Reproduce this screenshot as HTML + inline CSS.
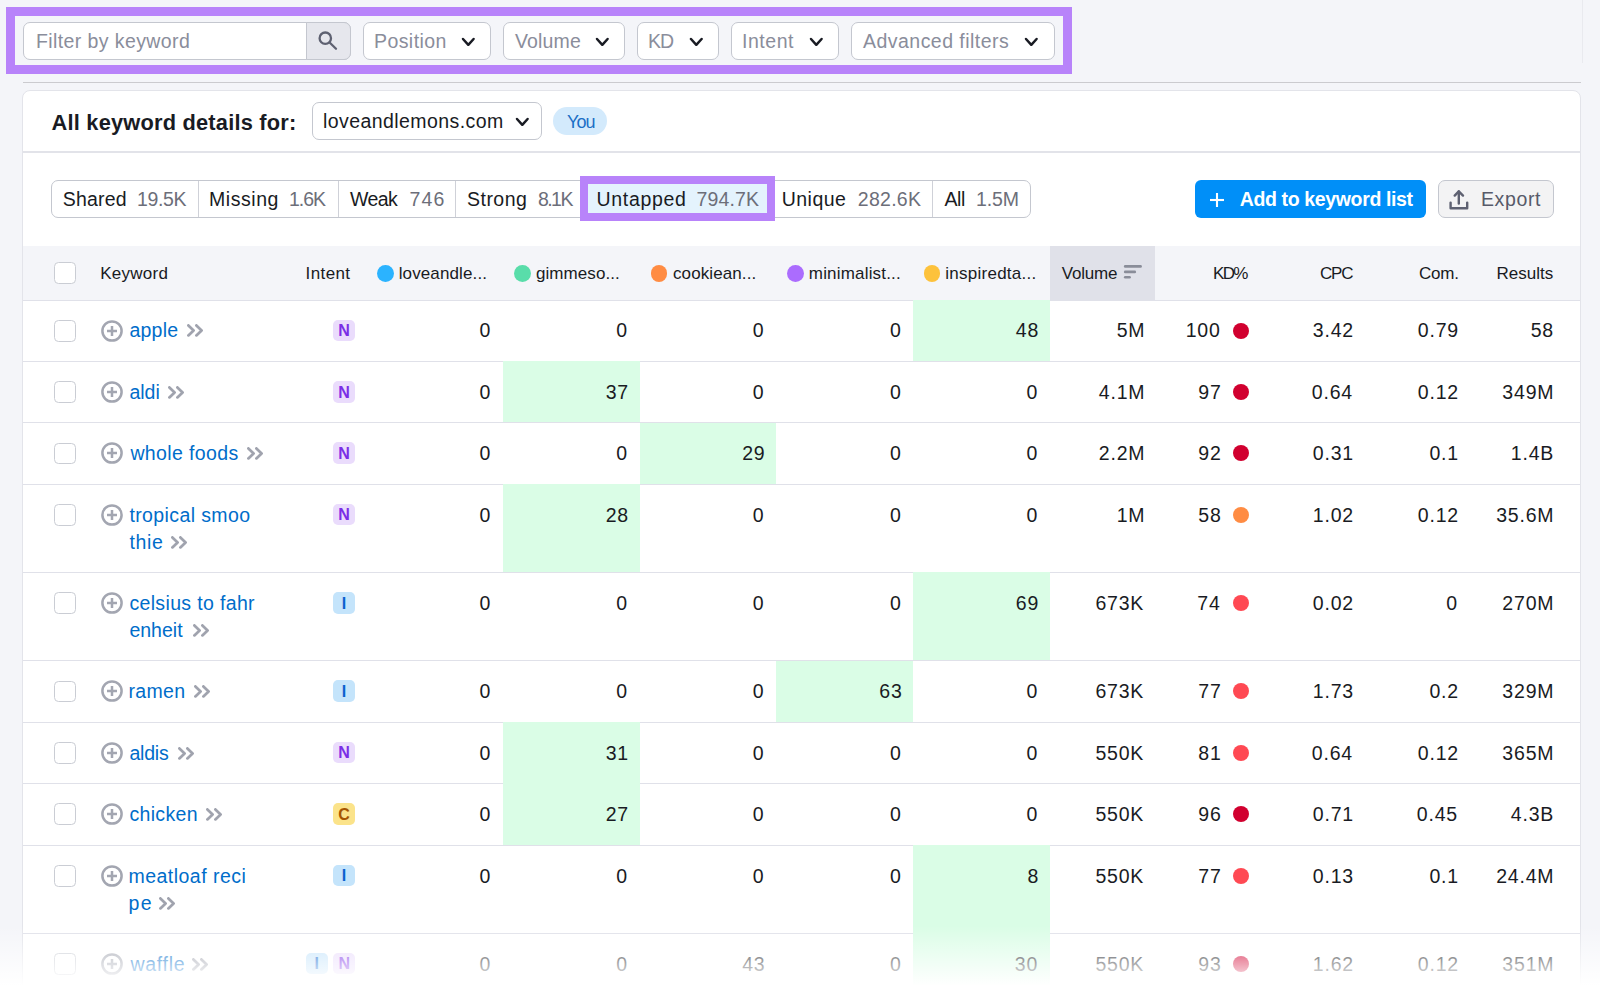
<!DOCTYPE html>
<html><head><meta charset="utf-8"><title>Keyword Gap</title>
<style>
html,body{margin:0;padding:0;}
body{width:1600px;height:995px;overflow:hidden;background:#f4f5f9;position:relative;font-family:"Liberation Sans", sans-serif;}
body>div{position:absolute;}
.t{white-space:nowrap;}
</style></head><body>
<div style="left:1582px;top:0px;width:1px;height:63px;background:#e9eaef;"></div>
<div style="left:6px;top:7px;width:1066.3px;height:67.1px;border:9.5px solid #b883fa;box-sizing:border-box;"></div>
<div style="left:23px;top:22px;width:328px;height:38px;background:#fff;border:1px solid #c4c7cf;border-radius:7px;box-sizing:border-box;"></div>
<div style="left:306px;top:22px;width:45px;height:38px;background:#e6e7ed;border:1px solid #c4c7cf;border-radius:0 7px 7px 0;box-sizing:border-box;"></div>
<div class="t" style="top:31.79px;font-size:19.5px;line-height:19.5px;color:#8a8d9b;font-weight:400;letter-spacing:0.404px;left:36.00px;">Filter by keyword</div>
<svg style="position:absolute;left:316px;top:29px;" width="24" height="24" viewBox="0 0 24 24"><circle cx="9.3" cy="9.2" r="5.7" fill="none" stroke="#5e6171" stroke-width="2.3"/><line x1="13.6" y1="13.5" x2="20" y2="19.8" stroke="#5e6171" stroke-width="2.3" stroke-linecap="round"/></svg>
<div style="left:362.5px;top:22px;width:128.0px;height:38px;background:#fff;border:1px solid #c4c7cf;border-radius:7px;box-sizing:border-box;"></div>
<div class="t" style="top:31.79px;font-size:19.5px;line-height:19.5px;color:#8a8d9b;font-weight:400;letter-spacing:0.424px;left:374.00px;">Position</div>
<svg style="position:absolute;left:461.2px;top:36.9px;" width="14.6" height="9.8" viewBox="0 0 14.6 9.8"><polyline points="2,2 7.3,7.8 12.6,2" fill="none" stroke="#191b23" stroke-width="2.5" stroke-linecap="round" stroke-linejoin="round"/></svg>
<div style="left:502.5px;top:22px;width:122.5px;height:38px;background:#fff;border:1px solid #c4c7cf;border-radius:7px;box-sizing:border-box;"></div>
<div class="t" style="top:31.79px;font-size:19.5px;line-height:19.5px;color:#8a8d9b;font-weight:400;letter-spacing:0.161px;left:515.00px;">Volume</div>
<svg style="position:absolute;left:595.2px;top:36.9px;" width="14.6" height="9.8" viewBox="0 0 14.6 9.8"><polyline points="2,2 7.3,7.8 12.6,2" fill="none" stroke="#191b23" stroke-width="2.5" stroke-linecap="round" stroke-linejoin="round"/></svg>
<div style="left:637px;top:22px;width:82px;height:38px;background:#fff;border:1px solid #c4c7cf;border-radius:7px;box-sizing:border-box;"></div>
<div class="t" style="top:31.79px;font-size:19.5px;line-height:19.5px;color:#8a8d9b;font-weight:400;letter-spacing:-1.006px;left:648.00px;">KD</div>
<svg style="position:absolute;left:688.7px;top:36.9px;" width="14.6" height="9.8" viewBox="0 0 14.6 9.8"><polyline points="2,2 7.3,7.8 12.6,2" fill="none" stroke="#191b23" stroke-width="2.5" stroke-linecap="round" stroke-linejoin="round"/></svg>
<div style="left:730.5px;top:22px;width:108.5px;height:38px;background:#fff;border:1px solid #c4c7cf;border-radius:7px;box-sizing:border-box;"></div>
<div class="t" style="top:31.79px;font-size:19.5px;line-height:19.5px;color:#8a8d9b;font-weight:400;letter-spacing:0.526px;left:742.00px;">Intent</div>
<svg style="position:absolute;left:809.2px;top:36.9px;" width="14.6" height="9.8" viewBox="0 0 14.6 9.8"><polyline points="2,2 7.3,7.8 12.6,2" fill="none" stroke="#191b23" stroke-width="2.5" stroke-linecap="round" stroke-linejoin="round"/></svg>
<div style="left:851px;top:22px;width:203.5px;height:38px;background:#fff;border:1px solid #c4c7cf;border-radius:7px;box-sizing:border-box;"></div>
<div class="t" style="top:31.79px;font-size:19.5px;line-height:19.5px;color:#8a8d9b;font-weight:400;letter-spacing:0.467px;left:863.00px;">Advanced filters</div>
<svg style="position:absolute;left:1024.45px;top:36.9px;" width="14.6" height="9.8" viewBox="0 0 14.6 9.8"><polyline points="2,2 7.3,7.8 12.6,2" fill="none" stroke="#191b23" stroke-width="2.5" stroke-linecap="round" stroke-linejoin="round"/></svg>
<div style="left:23px;top:82px;width:1558px;height:1.2px;background:#cbcbcf;"></div>
<div style="left:22px;top:90.4px;width:1559px;height:1000px;background:#fff;border:1px solid #e3e4ea;border-radius:8px;box-sizing:border-box;"></div>
<div class="t" style="top:111.85px;font-size:21.8px;line-height:21.8px;color:#191b23;font-weight:700;letter-spacing:0.210px;left:51.60px;">All keyword details for:</div>
<div style="left:312px;top:102px;width:230px;height:38px;background:#fff;border:1px solid #c4c7cf;border-radius:7px;box-sizing:border-box;"></div>
<div class="t" style="top:111.79px;font-size:19.5px;line-height:19.5px;color:#191b23;font-weight:400;letter-spacing:0.426px;left:323.00px;">loveandlemons.com</div>
<svg style="position:absolute;left:515.2px;top:117.1px;" width="14.6" height="9.8" viewBox="0 0 14.6 9.8"><polyline points="2,2 7.3,7.8 12.6,2" fill="none" stroke="#191b23" stroke-width="2.5" stroke-linecap="round" stroke-linejoin="round"/></svg>
<div style="left:553px;top:107px;width:54px;height:28px;background:#d3eafc;border-radius:14px;"></div>
<div class="t" style="top:113.06px;font-size:18px;line-height:18px;color:#1b6fc6;font-weight:400;letter-spacing:-0.932px;left:567.00px;">You</div>
<div style="left:23px;top:151px;width:1557px;height:1.5px;background:#e2e3e9;"></div>
<div style="left:51px;top:180px;width:979.6px;height:38px;background:#fff;border:1px solid #c4c7cf;border-radius:7px;box-sizing:border-box;"></div>
<div style="left:197.5px;top:181px;width:1px;height:36px;background:#cfd1d8;"></div>
<div style="left:337.6px;top:181px;width:1px;height:36px;background:#cfd1d8;"></div>
<div style="left:455px;top:181px;width:1px;height:36px;background:#cfd1d8;"></div>
<div style="left:932.2px;top:181px;width:1px;height:36px;background:#cfd1d8;"></div>
<div style="left:580.2px;top:175.8px;width:195.3px;height:45px;border:8px solid #b883fa;box-sizing:border-box;background:#e4f3fd;"></div>
<div class="t" style="top:189.79px;font-size:19.5px;line-height:19.5px;color:#191b23;font-weight:400;letter-spacing:0.213px;left:62.70px;">Shared</div>
<div class="t" style="top:189.79px;font-size:19.5px;line-height:19.5px;color:#6c6e79;font-weight:400;letter-spacing:-0.363px;left:137.00px;">19.5K</div>
<div class="t" style="top:189.79px;font-size:19.5px;line-height:19.5px;color:#191b23;font-weight:400;letter-spacing:0.558px;left:209.00px;">Missing</div>
<div class="t" style="top:189.79px;font-size:19.5px;line-height:19.5px;color:#6c6e79;font-weight:400;letter-spacing:-1.036px;left:289.00px;">1.6K</div>
<div class="t" style="top:189.79px;font-size:19.5px;line-height:19.5px;color:#191b23;font-weight:400;letter-spacing:-0.581px;left:350.00px;">Weak</div>
<div class="t" style="top:189.79px;font-size:19.5px;line-height:19.5px;color:#6c6e79;font-weight:400;letter-spacing:1.155px;left:409.50px;">746</div>
<div class="t" style="top:189.79px;font-size:19.5px;line-height:19.5px;color:#191b23;font-weight:400;letter-spacing:0.478px;left:467.00px;">Strong</div>
<div class="t" style="top:189.79px;font-size:19.5px;line-height:19.5px;color:#6c6e79;font-weight:400;letter-spacing:-1.569px;left:538.00px;">8.1K</div>
<div class="t" style="top:189.79px;font-size:19.5px;line-height:19.5px;color:#191b23;font-weight:400;letter-spacing:0.682px;left:596.50px;">Untapped</div>
<div class="t" style="top:189.79px;font-size:19.5px;line-height:19.5px;color:#6c6e79;font-weight:400;letter-spacing:0.140px;left:696.50px;">794.7K</div>
<div class="t" style="top:189.79px;font-size:19.5px;line-height:19.5px;color:#191b23;font-weight:400;letter-spacing:0.450px;left:781.80px;">Unique</div>
<div class="t" style="top:189.79px;font-size:19.5px;line-height:19.5px;color:#6c6e79;font-weight:400;letter-spacing:0.280px;left:857.80px;">282.6K</div>
<div class="t" style="top:189.79px;font-size:19.5px;line-height:19.5px;color:#191b23;font-weight:400;letter-spacing:-0.369px;left:944.40px;">All</div>
<div class="t" style="top:189.79px;font-size:19.5px;line-height:19.5px;color:#6c6e79;font-weight:400;letter-spacing:-0.103px;left:976.00px;">1.5M</div>
<div style="left:1195.4px;top:180.3px;width:230.8px;height:37.5px;background:#008ff8;border-radius:6px;"></div>
<svg style="position:absolute;left:1208px;top:191px;" width="18" height="18" viewBox="0 0 18 18"><line x1="9" y1="2" x2="9" y2="16" stroke="#fff" stroke-width="2.1"/><line x1="2" y1="9" x2="16" y2="9" stroke="#fff" stroke-width="2.1"/></svg>
<div class="t" style="top:189.79px;font-size:19.5px;line-height:19.5px;color:#fff;font-weight:700;letter-spacing:-0.362px;left:1239.75px;">Add to keyword list</div>
<div style="left:1437.7px;top:180.3px;width:116.2px;height:37.3px;background:#f3f3f4;border:1px solid #c4c7cf;border-radius:7px;box-sizing:border-box;"></div>
<svg style="position:absolute;left:1447px;top:188px;" width="24" height="24" viewBox="0 0 24 24"><polyline points="3.6,14.6 3.6,20.2 20.2,20.2 20.2,14.6" fill="none" stroke="#5e6171" stroke-width="2.4" stroke-linecap="round" stroke-linejoin="round"/><line x1="11.8" y1="3.5" x2="11.8" y2="15.5" stroke="#5e6171" stroke-width="2.4" stroke-linecap="round"/><polyline points="7.7,7.6 11.8,3.3 16,7.6" fill="none" stroke="#5e6171" stroke-width="2.4" stroke-linecap="round" stroke-linejoin="round"/></svg>
<div class="t" style="top:189.79px;font-size:19.5px;line-height:19.5px;color:#575a69;font-weight:400;letter-spacing:0.612px;left:1481.00px;">Export</div>
<div style="left:23px;top:246px;width:1557px;height:54px;background:#f4f5f9;"></div>
<div style="left:1050px;top:246px;width:105px;height:54px;background:#e0e1e9;"></div>
<div style="left:23px;top:299.5px;width:1557px;height:1px;background:#e0e1e9;"></div>
<div style="left:54px;top:262px;width:21.6px;height:21.6px;background:#fff;border:1.4px solid #cacdd4;border-radius:4.5px;box-sizing:border-box;"></div>
<div class="t" style="top:264.91px;font-size:17px;line-height:17px;color:#191b23;font-weight:400;letter-spacing:0.261px;left:100.25px;">Keyword</div>
<div class="t" style="top:264.91px;font-size:17px;line-height:17px;color:#191b23;font-weight:400;letter-spacing:0.378px;left:305.60px;">Intent</div>
<div style="left:377.2px;top:264.9px;width:16.9px;height:16.8px;background:#2bb3ff;border-radius:50%;"></div>
<div class="t" style="top:264.91px;font-size:17px;line-height:17px;color:#191b23;font-weight:400;letter-spacing:0.120px;left:398.70px;">loveandle...</div>
<div style="left:514px;top:264.9px;width:16.9px;height:16.8px;background:#59ddaa;border-radius:50%;"></div>
<div class="t" style="top:264.91px;font-size:17px;line-height:17px;color:#191b23;font-weight:400;letter-spacing:0.066px;left:536.00px;">gimmeso...</div>
<div style="left:650.5px;top:264.9px;width:16.9px;height:16.8px;background:#ff8c43;border-radius:50%;"></div>
<div class="t" style="top:264.91px;font-size:17px;line-height:17px;color:#191b23;font-weight:400;letter-spacing:0.100px;left:673.00px;">cookiean...</div>
<div style="left:787px;top:264.9px;width:16.9px;height:16.8px;background:#ab6cfe;border-radius:50%;"></div>
<div class="t" style="top:264.91px;font-size:17px;line-height:17px;color:#191b23;font-weight:400;letter-spacing:0.183px;left:808.80px;">minimalist...</div>
<div style="left:923.5px;top:264.9px;width:16.9px;height:16.8px;background:#fdc23c;border-radius:50%;"></div>
<div class="t" style="top:264.91px;font-size:17px;line-height:17px;color:#191b23;font-weight:400;letter-spacing:0.254px;left:945.30px;">inspiredta...</div>
<div class="t" style="top:264.91px;font-size:17px;line-height:17px;color:#191b23;font-weight:400;letter-spacing:-0.190px;left:1061.70px;">Volume</div>
<svg style="position:absolute;left:1122px;top:263px;" width="22" height="18" viewBox="0 0 22 18"><line x1="3.2" y1="3.4" x2="18.6" y2="3.4" stroke="#8a8d99" stroke-width="2.6" stroke-linecap="round"/><line x1="3.2" y1="8.9" x2="12.8" y2="8.9" stroke="#8a8d99" stroke-width="2.6" stroke-linecap="round"/><line x1="3.2" y1="14.2" x2="7.6" y2="14.2" stroke="#8a8d99" stroke-width="2.6" stroke-linecap="round"/></svg>
<div class="t" style="top:264.91px;font-size:17px;line-height:17px;color:#191b23;font-weight:400;letter-spacing:-1.658px;left:1213.00px;">KD%</div>
<div class="t" style="top:264.91px;font-size:17px;line-height:17px;color:#191b23;font-weight:400;letter-spacing:-1.158px;left:1320.00px;">CPC</div>
<div class="t" style="top:264.91px;font-size:17px;line-height:17px;color:#191b23;font-weight:400;letter-spacing:-0.198px;left:1419.00px;">Com.</div>
<div class="t" style="top:264.91px;font-size:17px;line-height:17px;color:#191b23;font-weight:400;letter-spacing:0.019px;left:1496.50px;">Results</div>
<div style="left:913px;top:300px;width:137px;height:61.39999999999998px;background:#dafde6;"></div>
<div style="left:23px;top:360.9px;width:1557px;height:1px;background:#e0e1e9;"></div>
<div style="left:54px;top:320px;width:21.6px;height:21.6px;background:#fff;border:1.4px solid #cacdd4;border-radius:4.5px;box-sizing:border-box;"></div>
<svg style="position:absolute;left:99px;top:317.6px;" width="26" height="26" viewBox="0 0 26 26"><circle cx="13" cy="13" r="9.6" fill="none" stroke="#a3a6b1" stroke-width="2.5"/><line x1="13" y1="8" x2="13" y2="18" stroke="#a3a6b1" stroke-width="2.5"/><line x1="8" y1="13" x2="18" y2="13" stroke="#a3a6b1" stroke-width="2.5"/></svg>
<div class="t" style="top:320.79px;font-size:19.5px;line-height:19.5px;color:#006dca;font-weight:400;letter-spacing:0.258px;left:129.40px;">apple</div>
<svg style="position:absolute;left:186.9px;top:323.9px;" width="17" height="14" viewBox="0 0 17 14"><polyline points="1.4,1.4 6.6,6.4 1.4,11.4" fill="none" stroke="#a0a3ae" stroke-width="2.75" stroke-linecap="round" stroke-linejoin="round"/><polyline points="9.4,1.4 14.6,6.4 9.4,11.4" fill="none" stroke="#a0a3ae" stroke-width="2.75" stroke-linecap="round" stroke-linejoin="round"/></svg>
<div style="left:333.2px;top:319.5px;width:21.8px;height:21.9px;background:#eadcfc;border-radius:5px;"></div>
<div class="t" style="top:322.76px;font-size:16px;line-height:16px;color:#7b2ee6;font-weight:700;left:144.10px;width:400px;text-align:center;">N</div>
<div class="t" style="top:320.79px;font-size:19.5px;line-height:19.5px;color:#191b23;font-weight:400;letter-spacing:0.800px;right:1108.76px;text-align:right;">0</div>
<div class="t" style="top:320.79px;font-size:19.5px;line-height:19.5px;color:#191b23;font-weight:400;letter-spacing:0.800px;right:972.06px;text-align:right;">0</div>
<div class="t" style="top:320.79px;font-size:19.5px;line-height:19.5px;color:#191b23;font-weight:400;letter-spacing:0.800px;right:835.56px;text-align:right;">0</div>
<div class="t" style="top:320.79px;font-size:19.5px;line-height:19.5px;color:#191b23;font-weight:400;letter-spacing:0.800px;right:698.36px;text-align:right;">0</div>
<div class="t" style="top:320.79px;font-size:19.5px;line-height:19.5px;color:#191b23;font-weight:400;letter-spacing:0.800px;right:560.86px;text-align:right;">48</div>
<div class="t" style="top:320.79px;font-size:19.5px;line-height:19.5px;color:#191b23;font-weight:400;letter-spacing:0.800px;right:454.66px;text-align:right;">5M</div>
<div class="t" style="top:320.79px;font-size:19.5px;line-height:19.5px;color:#191b23;font-weight:400;letter-spacing:0.800px;right:379.36px;text-align:right;">100</div>
<div style="left:1233px;top:322.6px;width:16px;height:16px;background:#d1002f;border-radius:50%;"></div>
<div class="t" style="top:320.79px;font-size:19.5px;line-height:19.5px;color:#191b23;font-weight:400;letter-spacing:0.800px;right:246.06px;text-align:right;">3.42</div>
<div class="t" style="top:320.79px;font-size:19.5px;line-height:19.5px;color:#191b23;font-weight:400;letter-spacing:0.800px;right:141.06px;text-align:right;">0.79</div>
<div class="t" style="top:320.79px;font-size:19.5px;line-height:19.5px;color:#191b23;font-weight:400;letter-spacing:0.800px;right:46.06px;text-align:right;">58</div>
<div style="left:503px;top:361.4px;width:136.5px;height:61.30000000000001px;background:#dafde6;"></div>
<div style="left:23px;top:422.2px;width:1557px;height:1px;background:#e0e1e9;"></div>
<div style="left:54px;top:381.4px;width:21.6px;height:21.6px;background:#fff;border:1.4px solid #cacdd4;border-radius:4.5px;box-sizing:border-box;"></div>
<svg style="position:absolute;left:99px;top:379.0px;" width="26" height="26" viewBox="0 0 26 26"><circle cx="13" cy="13" r="9.6" fill="none" stroke="#a3a6b1" stroke-width="2.5"/><line x1="13" y1="8" x2="13" y2="18" stroke="#a3a6b1" stroke-width="2.5"/><line x1="8" y1="13" x2="18" y2="13" stroke="#a3a6b1" stroke-width="2.5"/></svg>
<div class="t" style="top:382.79px;font-size:19.5px;line-height:19.5px;color:#006dca;font-weight:400;letter-spacing:-0.007px;left:129.40px;">aldi</div>
<svg style="position:absolute;left:168.1px;top:385.9px;" width="17" height="14" viewBox="0 0 17 14"><polyline points="1.4,1.4 6.6,6.4 1.4,11.4" fill="none" stroke="#a0a3ae" stroke-width="2.75" stroke-linecap="round" stroke-linejoin="round"/><polyline points="9.4,1.4 14.6,6.4 9.4,11.4" fill="none" stroke="#a0a3ae" stroke-width="2.75" stroke-linecap="round" stroke-linejoin="round"/></svg>
<div style="left:333.2px;top:380.9px;width:21.8px;height:21.9px;background:#eadcfc;border-radius:5px;"></div>
<div class="t" style="top:384.76px;font-size:16px;line-height:16px;color:#7b2ee6;font-weight:700;left:144.10px;width:400px;text-align:center;">N</div>
<div class="t" style="top:382.79px;font-size:19.5px;line-height:19.5px;color:#191b23;font-weight:400;letter-spacing:0.800px;right:1108.76px;text-align:right;">0</div>
<div class="t" style="top:382.79px;font-size:19.5px;line-height:19.5px;color:#191b23;font-weight:400;letter-spacing:0.800px;right:971.06px;text-align:right;">37</div>
<div class="t" style="top:382.79px;font-size:19.5px;line-height:19.5px;color:#191b23;font-weight:400;letter-spacing:0.800px;right:835.56px;text-align:right;">0</div>
<div class="t" style="top:382.79px;font-size:19.5px;line-height:19.5px;color:#191b23;font-weight:400;letter-spacing:0.800px;right:698.36px;text-align:right;">0</div>
<div class="t" style="top:382.79px;font-size:19.5px;line-height:19.5px;color:#191b23;font-weight:400;letter-spacing:0.800px;right:561.86px;text-align:right;">0</div>
<div class="t" style="top:382.79px;font-size:19.5px;line-height:19.5px;color:#191b23;font-weight:400;letter-spacing:0.800px;right:454.66px;text-align:right;">4.1M</div>
<div class="t" style="top:382.79px;font-size:19.5px;line-height:19.5px;color:#191b23;font-weight:400;letter-spacing:0.800px;right:378.36px;text-align:right;">97</div>
<div style="left:1233px;top:384.0px;width:16px;height:16px;background:#d1002f;border-radius:50%;"></div>
<div class="t" style="top:382.79px;font-size:19.5px;line-height:19.5px;color:#191b23;font-weight:400;letter-spacing:0.800px;right:247.06px;text-align:right;">0.64</div>
<div class="t" style="top:382.79px;font-size:19.5px;line-height:19.5px;color:#191b23;font-weight:400;letter-spacing:0.800px;right:141.06px;text-align:right;">0.12</div>
<div class="t" style="top:382.79px;font-size:19.5px;line-height:19.5px;color:#191b23;font-weight:400;letter-spacing:0.800px;right:45.66px;text-align:right;">349M</div>
<div style="left:639.5px;top:422.7px;width:136.5px;height:61.30000000000001px;background:#dafde6;"></div>
<div style="left:23px;top:483.5px;width:1557px;height:1px;background:#e0e1e9;"></div>
<div style="left:54px;top:442.7px;width:21.6px;height:21.6px;background:#fff;border:1.4px solid #cacdd4;border-radius:4.5px;box-sizing:border-box;"></div>
<svg style="position:absolute;left:99px;top:440.3px;" width="26" height="26" viewBox="0 0 26 26"><circle cx="13" cy="13" r="9.6" fill="none" stroke="#a3a6b1" stroke-width="2.5"/><line x1="13" y1="8" x2="13" y2="18" stroke="#a3a6b1" stroke-width="2.5"/><line x1="8" y1="13" x2="18" y2="13" stroke="#a3a6b1" stroke-width="2.5"/></svg>
<div class="t" style="top:443.79px;font-size:19.5px;line-height:19.5px;color:#006dca;font-weight:400;letter-spacing:0.378px;left:130.40px;">whole foods</div>
<svg style="position:absolute;left:246.9px;top:446.9px;" width="17" height="14" viewBox="0 0 17 14"><polyline points="1.4,1.4 6.6,6.4 1.4,11.4" fill="none" stroke="#a0a3ae" stroke-width="2.75" stroke-linecap="round" stroke-linejoin="round"/><polyline points="9.4,1.4 14.6,6.4 9.4,11.4" fill="none" stroke="#a0a3ae" stroke-width="2.75" stroke-linecap="round" stroke-linejoin="round"/></svg>
<div style="left:333.2px;top:442.2px;width:21.8px;height:21.9px;background:#eadcfc;border-radius:5px;"></div>
<div class="t" style="top:445.76px;font-size:16px;line-height:16px;color:#7b2ee6;font-weight:700;left:144.10px;width:400px;text-align:center;">N</div>
<div class="t" style="top:443.79px;font-size:19.5px;line-height:19.5px;color:#191b23;font-weight:400;letter-spacing:0.800px;right:1108.76px;text-align:right;">0</div>
<div class="t" style="top:443.79px;font-size:19.5px;line-height:19.5px;color:#191b23;font-weight:400;letter-spacing:0.800px;right:972.06px;text-align:right;">0</div>
<div class="t" style="top:443.79px;font-size:19.5px;line-height:19.5px;color:#191b23;font-weight:400;letter-spacing:0.800px;right:834.56px;text-align:right;">29</div>
<div class="t" style="top:443.79px;font-size:19.5px;line-height:19.5px;color:#191b23;font-weight:400;letter-spacing:0.800px;right:698.36px;text-align:right;">0</div>
<div class="t" style="top:443.79px;font-size:19.5px;line-height:19.5px;color:#191b23;font-weight:400;letter-spacing:0.800px;right:561.86px;text-align:right;">0</div>
<div class="t" style="top:443.79px;font-size:19.5px;line-height:19.5px;color:#191b23;font-weight:400;letter-spacing:0.800px;right:454.66px;text-align:right;">2.2M</div>
<div class="t" style="top:443.79px;font-size:19.5px;line-height:19.5px;color:#191b23;font-weight:400;letter-spacing:0.800px;right:378.36px;text-align:right;">92</div>
<div style="left:1233px;top:445.3px;width:16px;height:16px;background:#d1002f;border-radius:50%;"></div>
<div class="t" style="top:443.79px;font-size:19.5px;line-height:19.5px;color:#191b23;font-weight:400;letter-spacing:0.800px;right:246.06px;text-align:right;">0.31</div>
<div class="t" style="top:443.79px;font-size:19.5px;line-height:19.5px;color:#191b23;font-weight:400;letter-spacing:0.800px;right:141.06px;text-align:right;">0.1</div>
<div class="t" style="top:443.79px;font-size:19.5px;line-height:19.5px;color:#191b23;font-weight:400;letter-spacing:0.800px;right:45.89px;text-align:right;">1.4B</div>
<div style="left:503px;top:484px;width:136.5px;height:88.29999999999995px;background:#dafde6;"></div>
<div style="left:23px;top:571.8px;width:1557px;height:1px;background:#e0e1e9;"></div>
<div style="left:54px;top:504px;width:21.6px;height:21.6px;background:#fff;border:1.4px solid #cacdd4;border-radius:4.5px;box-sizing:border-box;"></div>
<svg style="position:absolute;left:99px;top:501.6px;" width="26" height="26" viewBox="0 0 26 26"><circle cx="13" cy="13" r="9.6" fill="none" stroke="#a3a6b1" stroke-width="2.5"/><line x1="13" y1="8" x2="13" y2="18" stroke="#a3a6b1" stroke-width="2.5"/><line x1="8" y1="13" x2="18" y2="13" stroke="#a3a6b1" stroke-width="2.5"/></svg>
<div class="t" style="top:505.79px;font-size:19.5px;line-height:19.5px;color:#006dca;font-weight:400;letter-spacing:0.394px;left:129.40px;">tropical smoo</div>
<div class="t" style="top:532.79px;font-size:19.5px;line-height:19.5px;color:#006dca;font-weight:400;letter-spacing:0.635px;left:129.40px;">thie</div>
<svg style="position:absolute;left:171px;top:536.1px;" width="17" height="14" viewBox="0 0 17 14"><polyline points="1.4,1.4 6.6,6.4 1.4,11.4" fill="none" stroke="#a0a3ae" stroke-width="2.75" stroke-linecap="round" stroke-linejoin="round"/><polyline points="9.4,1.4 14.6,6.4 9.4,11.4" fill="none" stroke="#a0a3ae" stroke-width="2.75" stroke-linecap="round" stroke-linejoin="round"/></svg>
<div style="left:333.2px;top:503.5px;width:21.8px;height:21.9px;background:#eadcfc;border-radius:5px;"></div>
<div class="t" style="top:506.76px;font-size:16px;line-height:16px;color:#7b2ee6;font-weight:700;left:144.10px;width:400px;text-align:center;">N</div>
<div class="t" style="top:505.79px;font-size:19.5px;line-height:19.5px;color:#191b23;font-weight:400;letter-spacing:0.800px;right:1108.76px;text-align:right;">0</div>
<div class="t" style="top:505.79px;font-size:19.5px;line-height:19.5px;color:#191b23;font-weight:400;letter-spacing:0.800px;right:971.06px;text-align:right;">28</div>
<div class="t" style="top:505.79px;font-size:19.5px;line-height:19.5px;color:#191b23;font-weight:400;letter-spacing:0.800px;right:835.56px;text-align:right;">0</div>
<div class="t" style="top:505.79px;font-size:19.5px;line-height:19.5px;color:#191b23;font-weight:400;letter-spacing:0.800px;right:698.36px;text-align:right;">0</div>
<div class="t" style="top:505.79px;font-size:19.5px;line-height:19.5px;color:#191b23;font-weight:400;letter-spacing:0.800px;right:561.86px;text-align:right;">0</div>
<div class="t" style="top:505.79px;font-size:19.5px;line-height:19.5px;color:#191b23;font-weight:400;letter-spacing:0.800px;right:454.66px;text-align:right;">1M</div>
<div class="t" style="top:505.79px;font-size:19.5px;line-height:19.5px;color:#191b23;font-weight:400;letter-spacing:0.800px;right:378.36px;text-align:right;">58</div>
<div style="left:1233px;top:506.6px;width:16px;height:16px;background:#ff8c43;border-radius:50%;"></div>
<div class="t" style="top:505.79px;font-size:19.5px;line-height:19.5px;color:#191b23;font-weight:400;letter-spacing:0.800px;right:246.06px;text-align:right;">1.02</div>
<div class="t" style="top:505.79px;font-size:19.5px;line-height:19.5px;color:#191b23;font-weight:400;letter-spacing:0.800px;right:141.06px;text-align:right;">0.12</div>
<div class="t" style="top:505.79px;font-size:19.5px;line-height:19.5px;color:#191b23;font-weight:400;letter-spacing:0.800px;right:45.66px;text-align:right;">35.6M</div>
<div style="left:913px;top:572.3px;width:137px;height:88.20000000000005px;background:#dafde6;"></div>
<div style="left:23px;top:660.0px;width:1557px;height:1px;background:#e0e1e9;"></div>
<div style="left:54px;top:592.3px;width:21.6px;height:21.6px;background:#fff;border:1.4px solid #cacdd4;border-radius:4.5px;box-sizing:border-box;"></div>
<svg style="position:absolute;left:99px;top:589.9px;" width="26" height="26" viewBox="0 0 26 26"><circle cx="13" cy="13" r="9.6" fill="none" stroke="#a3a6b1" stroke-width="2.5"/><line x1="13" y1="8" x2="13" y2="18" stroke="#a3a6b1" stroke-width="2.5"/><line x1="8" y1="13" x2="18" y2="13" stroke="#a3a6b1" stroke-width="2.5"/></svg>
<div class="t" style="top:593.79px;font-size:19.5px;line-height:19.5px;color:#006dca;font-weight:400;letter-spacing:0.349px;left:129.40px;">celsius to fahr</div>
<div class="t" style="top:620.79px;font-size:19.5px;line-height:19.5px;color:#006dca;font-weight:400;letter-spacing:0.018px;left:129.40px;">enheit</div>
<svg style="position:absolute;left:193px;top:624.1px;" width="17" height="14" viewBox="0 0 17 14"><polyline points="1.4,1.4 6.6,6.4 1.4,11.4" fill="none" stroke="#a0a3ae" stroke-width="2.75" stroke-linecap="round" stroke-linejoin="round"/><polyline points="9.4,1.4 14.6,6.4 9.4,11.4" fill="none" stroke="#a0a3ae" stroke-width="2.75" stroke-linecap="round" stroke-linejoin="round"/></svg>
<div style="left:333.2px;top:591.8px;width:21.8px;height:21.9px;background:#c4e4fb;border-radius:5px;"></div>
<div class="t" style="top:595.76px;font-size:16px;line-height:16px;color:#0a62cf;font-weight:700;left:144.10px;width:400px;text-align:center;">I</div>
<div class="t" style="top:593.79px;font-size:19.5px;line-height:19.5px;color:#191b23;font-weight:400;letter-spacing:0.800px;right:1108.76px;text-align:right;">0</div>
<div class="t" style="top:593.79px;font-size:19.5px;line-height:19.5px;color:#191b23;font-weight:400;letter-spacing:0.800px;right:972.06px;text-align:right;">0</div>
<div class="t" style="top:593.79px;font-size:19.5px;line-height:19.5px;color:#191b23;font-weight:400;letter-spacing:0.800px;right:835.56px;text-align:right;">0</div>
<div class="t" style="top:593.79px;font-size:19.5px;line-height:19.5px;color:#191b23;font-weight:400;letter-spacing:0.800px;right:698.36px;text-align:right;">0</div>
<div class="t" style="top:593.79px;font-size:19.5px;line-height:19.5px;color:#191b23;font-weight:400;letter-spacing:0.800px;right:560.86px;text-align:right;">69</div>
<div class="t" style="top:593.79px;font-size:19.5px;line-height:19.5px;color:#191b23;font-weight:400;letter-spacing:0.800px;right:455.89px;text-align:right;">673K</div>
<div class="t" style="top:593.79px;font-size:19.5px;line-height:19.5px;color:#191b23;font-weight:400;letter-spacing:0.800px;right:379.36px;text-align:right;">74</div>
<div style="left:1233px;top:594.9px;width:16px;height:16px;background:#ff4953;border-radius:50%;"></div>
<div class="t" style="top:593.79px;font-size:19.5px;line-height:19.5px;color:#191b23;font-weight:400;letter-spacing:0.800px;right:246.06px;text-align:right;">0.02</div>
<div class="t" style="top:593.79px;font-size:19.5px;line-height:19.5px;color:#191b23;font-weight:400;letter-spacing:0.800px;right:142.06px;text-align:right;">0</div>
<div class="t" style="top:593.79px;font-size:19.5px;line-height:19.5px;color:#191b23;font-weight:400;letter-spacing:0.800px;right:45.66px;text-align:right;">270M</div>
<div style="left:776px;top:660.5px;width:137px;height:61.5px;background:#dafde6;"></div>
<div style="left:23px;top:721.5px;width:1557px;height:1px;background:#e0e1e9;"></div>
<div style="left:54px;top:680.5px;width:21.6px;height:21.6px;background:#fff;border:1.4px solid #cacdd4;border-radius:4.5px;box-sizing:border-box;"></div>
<svg style="position:absolute;left:99px;top:678.1px;" width="26" height="26" viewBox="0 0 26 26"><circle cx="13" cy="13" r="9.6" fill="none" stroke="#a3a6b1" stroke-width="2.5"/><line x1="13" y1="8" x2="13" y2="18" stroke="#a3a6b1" stroke-width="2.5"/><line x1="8" y1="13" x2="18" y2="13" stroke="#a3a6b1" stroke-width="2.5"/></svg>
<div class="t" style="top:681.79px;font-size:19.5px;line-height:19.5px;color:#006dca;font-weight:400;letter-spacing:0.343px;left:128.40px;">ramen</div>
<svg style="position:absolute;left:193.5px;top:684.9px;" width="17" height="14" viewBox="0 0 17 14"><polyline points="1.4,1.4 6.6,6.4 1.4,11.4" fill="none" stroke="#a0a3ae" stroke-width="2.75" stroke-linecap="round" stroke-linejoin="round"/><polyline points="9.4,1.4 14.6,6.4 9.4,11.4" fill="none" stroke="#a0a3ae" stroke-width="2.75" stroke-linecap="round" stroke-linejoin="round"/></svg>
<div style="left:333.2px;top:680.0px;width:21.8px;height:21.9px;background:#c4e4fb;border-radius:5px;"></div>
<div class="t" style="top:683.76px;font-size:16px;line-height:16px;color:#0a62cf;font-weight:700;left:144.10px;width:400px;text-align:center;">I</div>
<div class="t" style="top:681.79px;font-size:19.5px;line-height:19.5px;color:#191b23;font-weight:400;letter-spacing:0.800px;right:1108.76px;text-align:right;">0</div>
<div class="t" style="top:681.79px;font-size:19.5px;line-height:19.5px;color:#191b23;font-weight:400;letter-spacing:0.800px;right:972.06px;text-align:right;">0</div>
<div class="t" style="top:681.79px;font-size:19.5px;line-height:19.5px;color:#191b23;font-weight:400;letter-spacing:0.800px;right:835.56px;text-align:right;">0</div>
<div class="t" style="top:681.79px;font-size:19.5px;line-height:19.5px;color:#191b23;font-weight:400;letter-spacing:0.800px;right:697.36px;text-align:right;">63</div>
<div class="t" style="top:681.79px;font-size:19.5px;line-height:19.5px;color:#191b23;font-weight:400;letter-spacing:0.800px;right:561.86px;text-align:right;">0</div>
<div class="t" style="top:681.79px;font-size:19.5px;line-height:19.5px;color:#191b23;font-weight:400;letter-spacing:0.800px;right:455.89px;text-align:right;">673K</div>
<div class="t" style="top:681.79px;font-size:19.5px;line-height:19.5px;color:#191b23;font-weight:400;letter-spacing:0.800px;right:378.36px;text-align:right;">77</div>
<div style="left:1233px;top:683.1px;width:16px;height:16px;background:#ff4953;border-radius:50%;"></div>
<div class="t" style="top:681.79px;font-size:19.5px;line-height:19.5px;color:#191b23;font-weight:400;letter-spacing:0.800px;right:246.06px;text-align:right;">1.73</div>
<div class="t" style="top:681.79px;font-size:19.5px;line-height:19.5px;color:#191b23;font-weight:400;letter-spacing:0.800px;right:141.06px;text-align:right;">0.2</div>
<div class="t" style="top:681.79px;font-size:19.5px;line-height:19.5px;color:#191b23;font-weight:400;letter-spacing:0.800px;right:45.66px;text-align:right;">329M</div>
<div style="left:503px;top:722px;width:136.5px;height:61.39999999999998px;background:#dafde6;"></div>
<div style="left:23px;top:782.9px;width:1557px;height:1px;background:#e0e1e9;"></div>
<div style="left:54px;top:742px;width:21.6px;height:21.6px;background:#fff;border:1.4px solid #cacdd4;border-radius:4.5px;box-sizing:border-box;"></div>
<svg style="position:absolute;left:99px;top:739.6px;" width="26" height="26" viewBox="0 0 26 26"><circle cx="13" cy="13" r="9.6" fill="none" stroke="#a3a6b1" stroke-width="2.5"/><line x1="13" y1="8" x2="13" y2="18" stroke="#a3a6b1" stroke-width="2.5"/><line x1="8" y1="13" x2="18" y2="13" stroke="#a3a6b1" stroke-width="2.5"/></svg>
<div class="t" style="top:743.79px;font-size:19.5px;line-height:19.5px;color:#006dca;font-weight:400;letter-spacing:-0.214px;left:129.40px;">aldis</div>
<svg style="position:absolute;left:178.25px;top:746.9px;" width="17" height="14" viewBox="0 0 17 14"><polyline points="1.4,1.4 6.6,6.4 1.4,11.4" fill="none" stroke="#a0a3ae" stroke-width="2.75" stroke-linecap="round" stroke-linejoin="round"/><polyline points="9.4,1.4 14.6,6.4 9.4,11.4" fill="none" stroke="#a0a3ae" stroke-width="2.75" stroke-linecap="round" stroke-linejoin="round"/></svg>
<div style="left:333.2px;top:741.5px;width:21.8px;height:21.9px;background:#eadcfc;border-radius:5px;"></div>
<div class="t" style="top:744.76px;font-size:16px;line-height:16px;color:#7b2ee6;font-weight:700;left:144.10px;width:400px;text-align:center;">N</div>
<div class="t" style="top:743.79px;font-size:19.5px;line-height:19.5px;color:#191b23;font-weight:400;letter-spacing:0.800px;right:1108.76px;text-align:right;">0</div>
<div class="t" style="top:743.79px;font-size:19.5px;line-height:19.5px;color:#191b23;font-weight:400;letter-spacing:0.800px;right:971.06px;text-align:right;">31</div>
<div class="t" style="top:743.79px;font-size:19.5px;line-height:19.5px;color:#191b23;font-weight:400;letter-spacing:0.800px;right:835.56px;text-align:right;">0</div>
<div class="t" style="top:743.79px;font-size:19.5px;line-height:19.5px;color:#191b23;font-weight:400;letter-spacing:0.800px;right:698.36px;text-align:right;">0</div>
<div class="t" style="top:743.79px;font-size:19.5px;line-height:19.5px;color:#191b23;font-weight:400;letter-spacing:0.800px;right:561.86px;text-align:right;">0</div>
<div class="t" style="top:743.79px;font-size:19.5px;line-height:19.5px;color:#191b23;font-weight:400;letter-spacing:0.800px;right:455.89px;text-align:right;">550K</div>
<div class="t" style="top:743.79px;font-size:19.5px;line-height:19.5px;color:#191b23;font-weight:400;letter-spacing:0.800px;right:378.36px;text-align:right;">81</div>
<div style="left:1233px;top:744.6px;width:16px;height:16px;background:#ff4953;border-radius:50%;"></div>
<div class="t" style="top:743.79px;font-size:19.5px;line-height:19.5px;color:#191b23;font-weight:400;letter-spacing:0.800px;right:247.06px;text-align:right;">0.64</div>
<div class="t" style="top:743.79px;font-size:19.5px;line-height:19.5px;color:#191b23;font-weight:400;letter-spacing:0.800px;right:141.06px;text-align:right;">0.12</div>
<div class="t" style="top:743.79px;font-size:19.5px;line-height:19.5px;color:#191b23;font-weight:400;letter-spacing:0.800px;right:45.66px;text-align:right;">365M</div>
<div style="left:503px;top:783.4px;width:136.5px;height:61.60000000000002px;background:#dafde6;"></div>
<div style="left:23px;top:844.5px;width:1557px;height:1px;background:#e0e1e9;"></div>
<div style="left:54px;top:803.4px;width:21.6px;height:21.6px;background:#fff;border:1.4px solid #cacdd4;border-radius:4.5px;box-sizing:border-box;"></div>
<svg style="position:absolute;left:99px;top:801.0px;" width="26" height="26" viewBox="0 0 26 26"><circle cx="13" cy="13" r="9.6" fill="none" stroke="#a3a6b1" stroke-width="2.5"/><line x1="13" y1="8" x2="13" y2="18" stroke="#a3a6b1" stroke-width="2.5"/><line x1="8" y1="13" x2="18" y2="13" stroke="#a3a6b1" stroke-width="2.5"/></svg>
<div class="t" style="top:804.79px;font-size:19.5px;line-height:19.5px;color:#006dca;font-weight:400;letter-spacing:0.338px;left:129.40px;">chicken</div>
<svg style="position:absolute;left:205.8px;top:807.9px;" width="17" height="14" viewBox="0 0 17 14"><polyline points="1.4,1.4 6.6,6.4 1.4,11.4" fill="none" stroke="#a0a3ae" stroke-width="2.75" stroke-linecap="round" stroke-linejoin="round"/><polyline points="9.4,1.4 14.6,6.4 9.4,11.4" fill="none" stroke="#a0a3ae" stroke-width="2.75" stroke-linecap="round" stroke-linejoin="round"/></svg>
<div style="left:333.2px;top:802.9px;width:21.8px;height:21.9px;background:#fbe38a;border-radius:5px;"></div>
<div class="t" style="top:806.76px;font-size:16px;line-height:16px;color:#a65500;font-weight:700;left:144.10px;width:400px;text-align:center;">C</div>
<div class="t" style="top:804.79px;font-size:19.5px;line-height:19.5px;color:#191b23;font-weight:400;letter-spacing:0.800px;right:1108.76px;text-align:right;">0</div>
<div class="t" style="top:804.79px;font-size:19.5px;line-height:19.5px;color:#191b23;font-weight:400;letter-spacing:0.800px;right:971.06px;text-align:right;">27</div>
<div class="t" style="top:804.79px;font-size:19.5px;line-height:19.5px;color:#191b23;font-weight:400;letter-spacing:0.800px;right:835.56px;text-align:right;">0</div>
<div class="t" style="top:804.79px;font-size:19.5px;line-height:19.5px;color:#191b23;font-weight:400;letter-spacing:0.800px;right:698.36px;text-align:right;">0</div>
<div class="t" style="top:804.79px;font-size:19.5px;line-height:19.5px;color:#191b23;font-weight:400;letter-spacing:0.800px;right:561.86px;text-align:right;">0</div>
<div class="t" style="top:804.79px;font-size:19.5px;line-height:19.5px;color:#191b23;font-weight:400;letter-spacing:0.800px;right:455.89px;text-align:right;">550K</div>
<div class="t" style="top:804.79px;font-size:19.5px;line-height:19.5px;color:#191b23;font-weight:400;letter-spacing:0.800px;right:378.36px;text-align:right;">96</div>
<div style="left:1233px;top:806.0px;width:16px;height:16px;background:#d1002f;border-radius:50%;"></div>
<div class="t" style="top:804.79px;font-size:19.5px;line-height:19.5px;color:#191b23;font-weight:400;letter-spacing:0.800px;right:246.06px;text-align:right;">0.71</div>
<div class="t" style="top:804.79px;font-size:19.5px;line-height:19.5px;color:#191b23;font-weight:400;letter-spacing:0.800px;right:142.06px;text-align:right;">0.45</div>
<div class="t" style="top:804.79px;font-size:19.5px;line-height:19.5px;color:#191b23;font-weight:400;letter-spacing:0.800px;right:45.89px;text-align:right;">4.3B</div>
<div style="left:913px;top:845px;width:137px;height:88px;background:#dafde6;"></div>
<div style="left:23px;top:932.5px;width:1557px;height:1px;background:#e0e1e9;"></div>
<div style="left:54px;top:865px;width:21.6px;height:21.6px;background:#fff;border:1.4px solid #cacdd4;border-radius:4.5px;box-sizing:border-box;"></div>
<svg style="position:absolute;left:99px;top:862.6px;" width="26" height="26" viewBox="0 0 26 26"><circle cx="13" cy="13" r="9.6" fill="none" stroke="#a3a6b1" stroke-width="2.5"/><line x1="13" y1="8" x2="13" y2="18" stroke="#a3a6b1" stroke-width="2.5"/><line x1="8" y1="13" x2="18" y2="13" stroke="#a3a6b1" stroke-width="2.5"/></svg>
<div class="t" style="top:866.79px;font-size:19.5px;line-height:19.5px;color:#006dca;font-weight:400;letter-spacing:0.492px;left:128.40px;">meatloaf reci</div>
<div class="t" style="top:893.79px;font-size:19.5px;line-height:19.5px;color:#006dca;font-weight:400;letter-spacing:1.455px;left:128.40px;">pe</div>
<svg style="position:absolute;left:159.4px;top:897.1px;" width="17" height="14" viewBox="0 0 17 14"><polyline points="1.4,1.4 6.6,6.4 1.4,11.4" fill="none" stroke="#a0a3ae" stroke-width="2.75" stroke-linecap="round" stroke-linejoin="round"/><polyline points="9.4,1.4 14.6,6.4 9.4,11.4" fill="none" stroke="#a0a3ae" stroke-width="2.75" stroke-linecap="round" stroke-linejoin="round"/></svg>
<div style="left:333.2px;top:864.5px;width:21.8px;height:21.9px;background:#c4e4fb;border-radius:5px;"></div>
<div class="t" style="top:867.76px;font-size:16px;line-height:16px;color:#0a62cf;font-weight:700;left:144.10px;width:400px;text-align:center;">I</div>
<div class="t" style="top:866.79px;font-size:19.5px;line-height:19.5px;color:#191b23;font-weight:400;letter-spacing:0.800px;right:1108.76px;text-align:right;">0</div>
<div class="t" style="top:866.79px;font-size:19.5px;line-height:19.5px;color:#191b23;font-weight:400;letter-spacing:0.800px;right:972.06px;text-align:right;">0</div>
<div class="t" style="top:866.79px;font-size:19.5px;line-height:19.5px;color:#191b23;font-weight:400;letter-spacing:0.800px;right:835.56px;text-align:right;">0</div>
<div class="t" style="top:866.79px;font-size:19.5px;line-height:19.5px;color:#191b23;font-weight:400;letter-spacing:0.800px;right:698.36px;text-align:right;">0</div>
<div class="t" style="top:866.79px;font-size:19.5px;line-height:19.5px;color:#191b23;font-weight:400;letter-spacing:0.800px;right:560.86px;text-align:right;">8</div>
<div class="t" style="top:866.79px;font-size:19.5px;line-height:19.5px;color:#191b23;font-weight:400;letter-spacing:0.800px;right:455.89px;text-align:right;">550K</div>
<div class="t" style="top:866.79px;font-size:19.5px;line-height:19.5px;color:#191b23;font-weight:400;letter-spacing:0.800px;right:378.36px;text-align:right;">77</div>
<div style="left:1233px;top:867.6px;width:16px;height:16px;background:#ff4953;border-radius:50%;"></div>
<div class="t" style="top:866.79px;font-size:19.5px;line-height:19.5px;color:#191b23;font-weight:400;letter-spacing:0.800px;right:246.06px;text-align:right;">0.13</div>
<div class="t" style="top:866.79px;font-size:19.5px;line-height:19.5px;color:#191b23;font-weight:400;letter-spacing:0.800px;right:141.06px;text-align:right;">0.1</div>
<div class="t" style="top:866.79px;font-size:19.5px;line-height:19.5px;color:#191b23;font-weight:400;letter-spacing:0.800px;right:45.66px;text-align:right;">24.4M</div>
<div style="left:913px;top:933px;width:137px;height:62px;background:#dafde6;"></div>
<div style="left:54px;top:953px;width:21.6px;height:21.6px;background:#fff;border:1.4px solid #cacdd4;border-radius:4.5px;box-sizing:border-box;"></div>
<svg style="position:absolute;left:99px;top:950.6px;" width="26" height="26" viewBox="0 0 26 26"><circle cx="13" cy="13" r="9.6" fill="none" stroke="#a3a6b1" stroke-width="2.5"/><line x1="13" y1="8" x2="13" y2="18" stroke="#a3a6b1" stroke-width="2.5"/><line x1="8" y1="13" x2="18" y2="13" stroke="#a3a6b1" stroke-width="2.5"/></svg>
<div class="t" style="top:954.79px;font-size:19.5px;line-height:19.5px;color:#006dca;font-weight:400;letter-spacing:0.711px;left:130.40px;">waffle</div>
<svg style="position:absolute;left:192px;top:957.9px;" width="17" height="14" viewBox="0 0 17 14"><polyline points="1.4,1.4 6.6,6.4 1.4,11.4" fill="none" stroke="#a0a3ae" stroke-width="2.75" stroke-linecap="round" stroke-linejoin="round"/><polyline points="9.4,1.4 14.6,6.4 9.4,11.4" fill="none" stroke="#a0a3ae" stroke-width="2.75" stroke-linecap="round" stroke-linejoin="round"/></svg>
<div style="left:305.9px;top:952.5px;width:21.8px;height:21.9px;background:#c4e4fb;border-radius:5px;"></div>
<div class="t" style="top:955.76px;font-size:16px;line-height:16px;color:#0a62cf;font-weight:700;left:116.80px;width:400px;text-align:center;">I</div>
<div style="left:333.4px;top:952.5px;width:21.8px;height:21.9px;background:#eadcfc;border-radius:5px;"></div>
<div class="t" style="top:955.76px;font-size:16px;line-height:16px;color:#7b2ee6;font-weight:700;left:144.30px;width:400px;text-align:center;">N</div>
<div class="t" style="top:954.79px;font-size:19.5px;line-height:19.5px;color:#191b23;font-weight:400;letter-spacing:0.800px;right:1108.76px;text-align:right;">0</div>
<div class="t" style="top:954.79px;font-size:19.5px;line-height:19.5px;color:#191b23;font-weight:400;letter-spacing:0.800px;right:972.06px;text-align:right;">0</div>
<div class="t" style="top:954.79px;font-size:19.5px;line-height:19.5px;color:#191b23;font-weight:400;letter-spacing:0.800px;right:834.56px;text-align:right;">43</div>
<div class="t" style="top:954.79px;font-size:19.5px;line-height:19.5px;color:#191b23;font-weight:400;letter-spacing:0.800px;right:698.36px;text-align:right;">0</div>
<div class="t" style="top:954.79px;font-size:19.5px;line-height:19.5px;color:#191b23;font-weight:400;letter-spacing:0.800px;right:561.86px;text-align:right;">30</div>
<div class="t" style="top:954.79px;font-size:19.5px;line-height:19.5px;color:#191b23;font-weight:400;letter-spacing:0.800px;right:455.89px;text-align:right;">550K</div>
<div class="t" style="top:954.79px;font-size:19.5px;line-height:19.5px;color:#191b23;font-weight:400;letter-spacing:0.800px;right:378.36px;text-align:right;">93</div>
<div style="left:1233px;top:955.6px;width:16px;height:16px;background:#d1002f;border-radius:50%;"></div>
<div class="t" style="top:954.79px;font-size:19.5px;line-height:19.5px;color:#191b23;font-weight:400;letter-spacing:0.800px;right:246.06px;text-align:right;">1.62</div>
<div class="t" style="top:954.79px;font-size:19.5px;line-height:19.5px;color:#191b23;font-weight:400;letter-spacing:0.800px;right:141.06px;text-align:right;">0.12</div>
<div class="t" style="top:954.79px;font-size:19.5px;line-height:19.5px;color:#191b23;font-weight:400;letter-spacing:0.800px;right:45.66px;text-align:right;">351M</div>
<div style="left:0px;top:926px;width:1600px;height:69px;background:linear-gradient(to bottom, rgba(255,255,255,0) 0%, rgba(255,255,255,0.62) 54%, #fff 87%, #fff 100%);"></div>
</body></html>
